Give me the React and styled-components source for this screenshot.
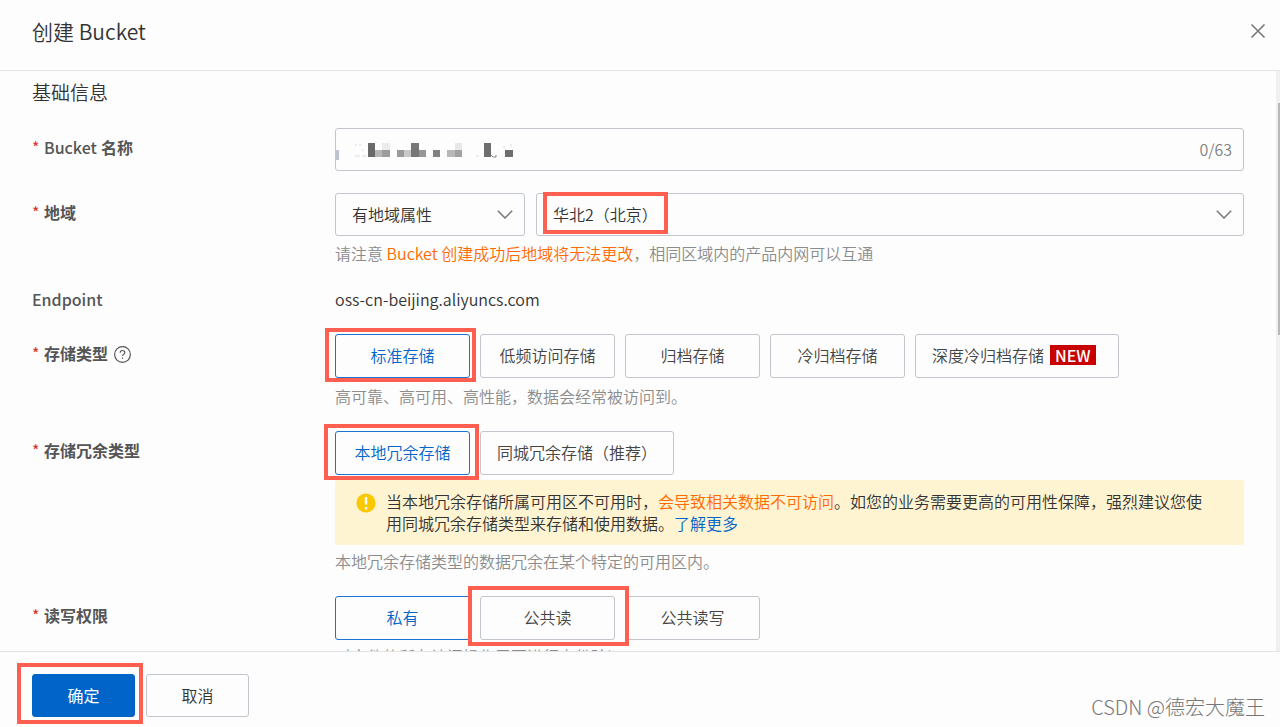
import React from "react"
import styled, { createGlobalStyle } from "styled-components"

const GlobalStyle = createGlobalStyle`
  * {
    box-sizing: border-box;
  }
  body {
    margin: 0;
    background: #fdfdfd;
    color: #333;
    font-family: "Noto Sans CJK SC", sans-serif;
    font-size: 16px;
    font-weight: 350;
    line-height: 22px;
  }
  button, input, select {
    font: inherit;
    color: inherit;
  }
`

const Page = styled.div`
  position: relative;
  height: 100vh;
  display: flex;
  flex-direction: column;
  overflow: hidden;
`

const Header = styled.header`
  display: flex;
  flex-shrink: 0;
  justify-content: space-between;
  align-items: center;
  height: 71px;
  padding: 0 14px 8px 32px;
  border-bottom: 1px solid #e3e4e6;
  h1 {
    margin: 0;
    font-size: 21px;
    font-weight: 350;
    line-height: 30px;
  }
`

const CloseButton = styled.button`
  display: flex;
  padding: 0;
  border: none;
  background: none;
  color: #777;
`

const Body = styled.main`
  position: relative;
  flex: 1;
  min-height: 0;
  overflow: hidden;
  padding: 7px 36px 0 32px;
`

const ScrollTrack = styled.div`
  position: absolute;
  top: 0;
  right: 0;
  bottom: 0;
  width: 4px;
  background: #f0f0f0;
  &::after {
    content: "";
    position: absolute;
    top: 32px;
    right: 0;
    width: 2px;
    height: 40%;
    background: #b9b9b9;
  }
`

const Form = styled.form`
  display: flex;
  flex-direction: column;
  gap: 22px;
  h2 {
    margin: 0;
    font-size: 19px;
    font-weight: 350;
    line-height: 28px;
  }
`

const Row = styled.div`
  display: grid;
  grid-template-columns: 303px minmax(0, 1fr);
  min-height: 24px;
`

const Label = styled.div`
  display: flex;
  align-items: center;
  align-self: start;
  padding-top: ${({ $flush }) => ($flush ? "0" : "8px")};
  color: #555;
  font-weight: ${({ $flush }) => ($flush ? "500" : "700")};
  &::before {
    content: ${({ $required }) => ($required ? '"*"' : "none")};
    width: 12px;
    color: #d93026;
    font-weight: 400;
  }
  svg {
    margin: 2px 0 0 6px;
  }
`

const Latin = styled.span`
  margin-right: 4px;
  font-weight: 500;
`

const Control = styled.div`
  position: relative;
`

const TextField = styled.input`
  display: block;
  width: 100%;
  height: 43px;
  padding: 0 64px 0 16px;
  border: 1px solid #c0c6cc;
  border-radius: 3px;
  background: none;
`

const Counter = styled.span`
  position: absolute;
  top: 10px;
  right: 12px;
  color: #808080;
`

const Mosaic = styled.svg`
  position: absolute;
  top: 13px;
  left: 1px;
`

const Selects = styled.div`
  display: grid;
  grid-template-columns: 190px minmax(0, 1fr);
  gap: 11px;
`

const SelectBox = styled.div`
  position: relative;
  select {
    display: block;
    width: 100%;
    height: 43px;
    padding: 0 40px 2px 16px;
    border: 1px solid #c0c6cc;
    border-radius: 3px;
    background: none;
    appearance: none;
  }
  > svg {
    position: absolute;
    top: 17px;
    right: 12px;
  }
`

const Hint = styled.p`
  margin: ${({ $gap }) => $gap} 0 0;
  padding-bottom: 2px;
  color: #8c8c8c;
`

const Warn = styled.span`
  color: #ff6a00;
`

const Choices = styled.div`
  display: flex;
  gap: 10px;
`

const Choice = styled.button`
  position: relative;
  display: flex;
  justify-content: center;
  align-items: center;
  min-width: 135px;
  height: 44px;
  padding: 0 16px 2px;
  border: 1px solid ${({ $active }) => ($active ? "#1a73d0" : "#c0c6cc")};
  border-radius: 3px;
  background: none;
  color: ${({ $active }) => ($active ? "#0064c8" : "#444")};
  white-space: nowrap;
`

const NewTag = styled.span`
  margin: 0 6px;
  padding: 0 5px;
  background: #c80000;
  color: #fff;
  font-weight: 500;
  line-height: 20px;
`

const Notice = styled.div`
  display: flex;
  gap: 10px;
  margin-top: 5px;
  padding: 10px 28px 11px 21px;
  border-radius: 2px;
  background: #fff4d1;
  svg {
    flex-shrink: 0;
    margin-top: 3px;
  }
  p {
    margin: 0;
  }
  a {
    color: #0064c8;
    text-decoration: none;
  }
`

const Footer = styled.footer`
  display: flex;
  flex-shrink: 0;
  gap: 11px;
  height: 76px;
  padding: 22px 32px 0;
  border-top: 1px solid #e3e4e6;
`

const FooterButton = styled.button`
  position: relative;
  width: 103px;
  height: 43px;
  padding: 0 0 2px;
  border: 1px solid ${({ $primary }) => ($primary ? "#0064c8" : "#c0c6cc")};
  border-radius: 3px;
  background: ${({ $primary }) => ($primary ? "#0064c8" : "none")};
  color: ${({ $primary }) => ($primary ? "#fff" : "#333")};
  font-weight: ${({ $primary }) => ($primary ? "400" : "350")};
`

// red frame drawn round a control
const Mark = styled.span`
  position: absolute;
  z-index: 1;
  inset: ${({ $inset }) => $inset};
  width: ${({ $width }) => $width || "auto"};
  border: 4px solid #ff5f50;
  pointer-events: none;
`

const Watermark = styled.div`
  position: absolute;
  right: 15px;
  bottom: 6px;
  color: #777;
  font-size: 20px;
  font-weight: 300;
  line-height: 28px;
`

const Chevron = () => (
  <svg width="16" height="9" viewBox="0 0 16 9" fill="none" stroke="#777" strokeWidth="1.5">
    <path d="M0.8 0.8 8 8 15.2 0.8" />
  </svg>
)

const blocks = [
  [0, 9, 3, 10, "#bcc4d0"],
  [32, 2, 7, 14, "#6a6a6a"],
  [39, 9, 7, 7, "#b6b6b6"],
  [46, 2, 8, 7, "#ececec"],
  [46, 9, 8, 7, "#9d9d9d"],
  [61, 9, 7, 7, "#9a9a9a"],
  [68, 9, 7, 7, "#c8c8c8"],
  [75, 2, 8, 14, "#777"],
  [83, 9, 7, 7, "#969696"],
  [97, 9, 7, 7, "#808080"],
  [111, 9, 8, 7, "#b8b8b8"],
  [119, 2, 7, 7, "#e8e8e8"],
  [119, 9, 7, 7, "#a2a2a2"],
  [148, 2, 7, 14, "#6e6e6e"],
  [169, 9, 8, 7, "#6e6e6e"],
]

const App = () => (
  <Page>
    <GlobalStyle />
    <Header>
      <h1>创建 Bucket</h1>
      <CloseButton aria-label="关闭">
        <svg width="16" height="16" viewBox="0 0 16 16" fill="none" stroke="currentColor" strokeWidth="1.6">
          <path d="M1.5 1.5 14.5 14.5M14.5 1.5 1.5 14.5" />
        </svg>
      </CloseButton>
    </Header>
    <Body>
      <Form>
        <h2>基础信息</h2>
        <Row>
          <Label as="label" htmlFor="name" $required><Latin>Bucket</Latin>名称</Label>
          <Control>
            <TextField id="name" type="text" />
            <Mosaic width="180" height="20">
              {blocks.map(([x, y, w, h, fill]) => (
                <rect key={`${x}-${y}`} x={x} y={y} width={w} height={h} fill={fill} />
              ))}
              <path d="M19 4h2M24 3v2M19 15h5M26 15h5M27 8v2M140 15h3M167 6h2M175 3v3" stroke="#ddd" />
              <path d="M155 14l2 2h3v-2" stroke="#888" fill="none" />
            </Mosaic>
            <Counter>0/63</Counter>
          </Control>
        </Row>
        <Row>
          <Label as="label" htmlFor="region" $required>地域</Label>
          <Control>
            <Selects>
              <SelectBox>
                <select aria-label="地域属性">
                  <option>有地域属性</option>
                </select>
                <Chevron />
              </SelectBox>
              <SelectBox>
                <select id="region">
                  <option>华北2（北京）</option>
                </select>
                <Chevron />
                <Mark $inset="-1px auto 2px 7px" $width="125px" />
              </SelectBox>
            </Selects>
            <Hint $gap="6px">
              请注意 <Warn>Bucket 创建成功后地域将无法更改</Warn>，相同区域内的产品内网可以互通
            </Hint>
          </Control>
        </Row>
        <Row>
          <Label $flush>Endpoint</Label>
          <Control>oss-cn-beijing.aliyuncs.com</Control>
        </Row>
        <Row>
          <Label $required>
            存储类型
            <svg width="17" height="17" viewBox="0 0 16 16" fill="none" stroke="#555" strokeWidth="1.1">
              <circle cx="8" cy="8" r="7.4" />
              <path d="M5.8 6.4C5.8 5 6.7 4.2 8 4.2s2.2.8 2.2 2c0 1.6-2.2 1.7-2.2 3.3M8 10.8v1.3" />
            </svg>
          </Label>
          <Control>
            <Choices>
              <Choice type="button" $active>
                标准存储
                <Mark $inset="-7px -7px -5px -11px" />
              </Choice>
              <Choice type="button">低频访问存储</Choice>
              <Choice type="button">归档存储</Choice>
              <Choice type="button">冷归档存储</Choice>
              <Choice type="button">
                深度冷归档存储<NewTag>NEW</NewTag>
              </Choice>
            </Choices>
            <Hint $gap="7px">高可靠、高可用、高性能，数据会经常被访问到。</Hint>
          </Control>
        </Row>
        <Row>
          <Label $required>存储冗余类型</Label>
          <Control>
            <Choices>
              <Choice type="button" $active>
                本地冗余存储
                <Mark $inset="-8px -10px -6px -12px" />
              </Choice>
              <Choice type="button">同城冗余存储（推荐）</Choice>
            </Choices>
            <Notice>
              <svg width="20" height="20" viewBox="0 0 20 20">
                <circle cx="10" cy="10" r="9.6" fill="#fac800" />
                <path d="M10 4v7.5M10 14v2.4" stroke="#fff" strokeWidth="2.4" />
              </svg>
              <p>
                当本地冗余存储所属可用区不可用时，<Warn>会导致相关数据不可访问</Warn>。如您的业务需要更高的可用性保障，强烈建议您使用同城冗余存储类型来存储和使用数据。<a href="#">了解更多</a>
              </p>
            </Notice>
            <Hint $gap="5px">本地冗余存储类型的数据冗余在某个特定的可用区内。</Hint>
          </Control>
        </Row>
        <Row>
          <Label $required>读写权限</Label>
          <Control>
            <Choices>
              <Choice type="button" $active>私有</Choice>
              <Choice type="button">
                公共读
                <Mark $inset="-11px -15px -7px -13px" />
              </Choice>
              <Choice type="button">公共读写</Choice>
            </Choices>
            <Hint $gap="5px">对文件的所有访问操作需要进行身份验证。</Hint>
          </Control>
        </Row>
      </Form>
      <ScrollTrack />
    </Body>
    <Footer>
      <FooterButton $primary>
        确定
        <Mark $inset="-12px -9px -8px -16px" />
      </FooterButton>
      <FooterButton>取消</FooterButton>
    </Footer>
    <Watermark>CSDN @德宏大魔王</Watermark>
  </Page>
)

export default App
